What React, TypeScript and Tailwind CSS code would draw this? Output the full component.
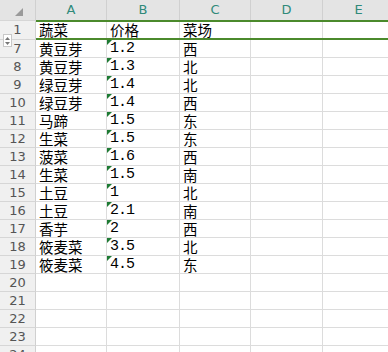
import React from "react";

const rows: [number, string, string, string][] = [
  [7, "黄豆芽", "1.2", "西"],
  [8, "黄豆芽", "1.3", "北"],
  [9, "绿豆芽", "1.4", "北"],
  [10, "绿豆芽", "1.4", "西"],
  [11, "马蹄", "1.5", "东"],
  [12, "生菜", "1.5", "东"],
  [13, "菠菜", "1.6", "西"],
  [14, "生菜", "1.5", "南"],
  [15, "土豆", "1", "北"],
  [16, "土豆", "2.1", "南"],
  [17, "香芋", "2", "西"],
  [18, "筱麦菜", "3.5", "北"],
  [19, "筱麦菜", "4.5", "东"],
  [20, "", "", ""],
  [21, "", "", ""],
  [22, "", "", ""],
  [23, "", "", ""],
  [24, "", "", ""],
];

const cjk = { fontFamily: '"Noto Sans CJK SC", "Noto Sans", sans-serif' };
const mono = { fontFamily: '"Liberation Mono", "DejaVu Sans Mono", monospace' };
const hdr = { fontFamily: '"DejaVu Sans", sans-serif' };

function Tri() {
  return (
    <svg className="absolute left-0 top-0" width="5" height="5" viewBox="0 0 5 5">
      <polygon points="0,0 5,0 0,5" fill="#1e7b34" />
    </svg>
  );
}

export default function App() {
  const cols = ["A", "B", "C", "D", "E"];
  const widths = ["w-[71px]", "w-[73px]", "w-[71px]", "w-[72px]", "w-[72px]"];
  return (
    <div className="relative w-[388px] h-[352px] overflow-hidden bg-white" style={cjk}>
      {/* column header */}
      <div className="flex h-[20px] bg-[#e4e4e4]">
        <div className="w-[36px] shrink-0 flex items-center justify-center border-r border-[#d0d0d0]">
          <svg width="8" height="8" viewBox="0 0 8 8" className="ml-[2px] mt-[3px]">
            <polygon points="8,0 8,8 0,8" fill="#9a9a9a" />
          </svg>
        </div>
        {cols.map((c, i) => (
          <div
            key={c}
            className={`${widths[i]} shrink-0 flex items-center justify-center border-r border-[#d0d0d0] text-[13px] text-[#2f8a7a]`}
            style={hdr}
          >
            {c}
          </div>
        ))}
      </div>
      {/* row 1 */}
      <div className="flex h-[20px]">
        <div className="w-[36px] shrink-0 bg-[#f0f0f0] border-t border-t-[#d6d6d6] border-r border-[#d0d0d0] border-b border-b-[#d6d6d6] flex items-center justify-center text-[13px] text-[#555]" style={hdr}>
          1
        </div>
        <div className="flex flex-col flex-1">
          <div className="h-[2px] shrink-0 bg-[#4b8a2c]" />
          <div className="flex h-[16px] shrink-0">
            {["蔬菜", "价格", "菜场", "", ""].map((t, i) => (
              <div key={i} className={`${widths[i]} shrink-0 border-r border-[#dcdcdc] pl-[3px] text-[14.5px] leading-[16px] text-black`}>
                {t}
              </div>
            ))}
          </div>
          <div className="h-[2px] shrink-0 bg-[#4b8a2c]" />
        </div>
      </div>
      {rows.map(([n, a, b, c]) => (
        <div key={n} className="flex h-[18px]">
          <div className="w-[36px] shrink-0 bg-[#f0f0f0] border-r border-[#d0d0d0] border-b border-b-[#d6d6d6] flex items-center justify-center text-[13px] text-[#555]" style={hdr}>
            {n}
          </div>
          <div className={`${widths[0]} shrink-0 border-r border-b border-[#dcdcdc] pl-[3px] text-[14.5px] leading-[17px] text-black`}>{a}</div>
          <div className={`relative ${widths[1]} shrink-0 border-r border-b border-[#dcdcdc] pl-[3px] text-[15px] leading-[18px] tracking-[-1px] text-black`} style={mono}>
            {b && <Tri />}
            {b}
          </div>
          <div className={`${widths[2]} shrink-0 border-r border-b border-[#dcdcdc] pl-[3px] text-[14.5px] leading-[17px] text-black`}>{c}</div>
          <div className={`${widths[3]} shrink-0 border-r border-b border-[#dcdcdc]`} />
          <div className={`${widths[4]} shrink-0 border-r border-b border-[#dcdcdc]`} />
        </div>
      ))}
      {/* split spinner icon */}
      <div className="absolute left-[3px] top-[34px] w-[9px] h-[13px] bg-white border border-[#c8c8c8] flex flex-col items-center justify-center gap-[2px]">
        <svg width="5" height="3" viewBox="0 0 5 3"><polygon points="2.5,0 5,3 0,3" fill="#777" /></svg>
        <svg width="5" height="3" viewBox="0 0 5 3"><polygon points="0,0 5,0 2.5,3" fill="#777" /></svg>
      </div>
    </div>
  );
}
